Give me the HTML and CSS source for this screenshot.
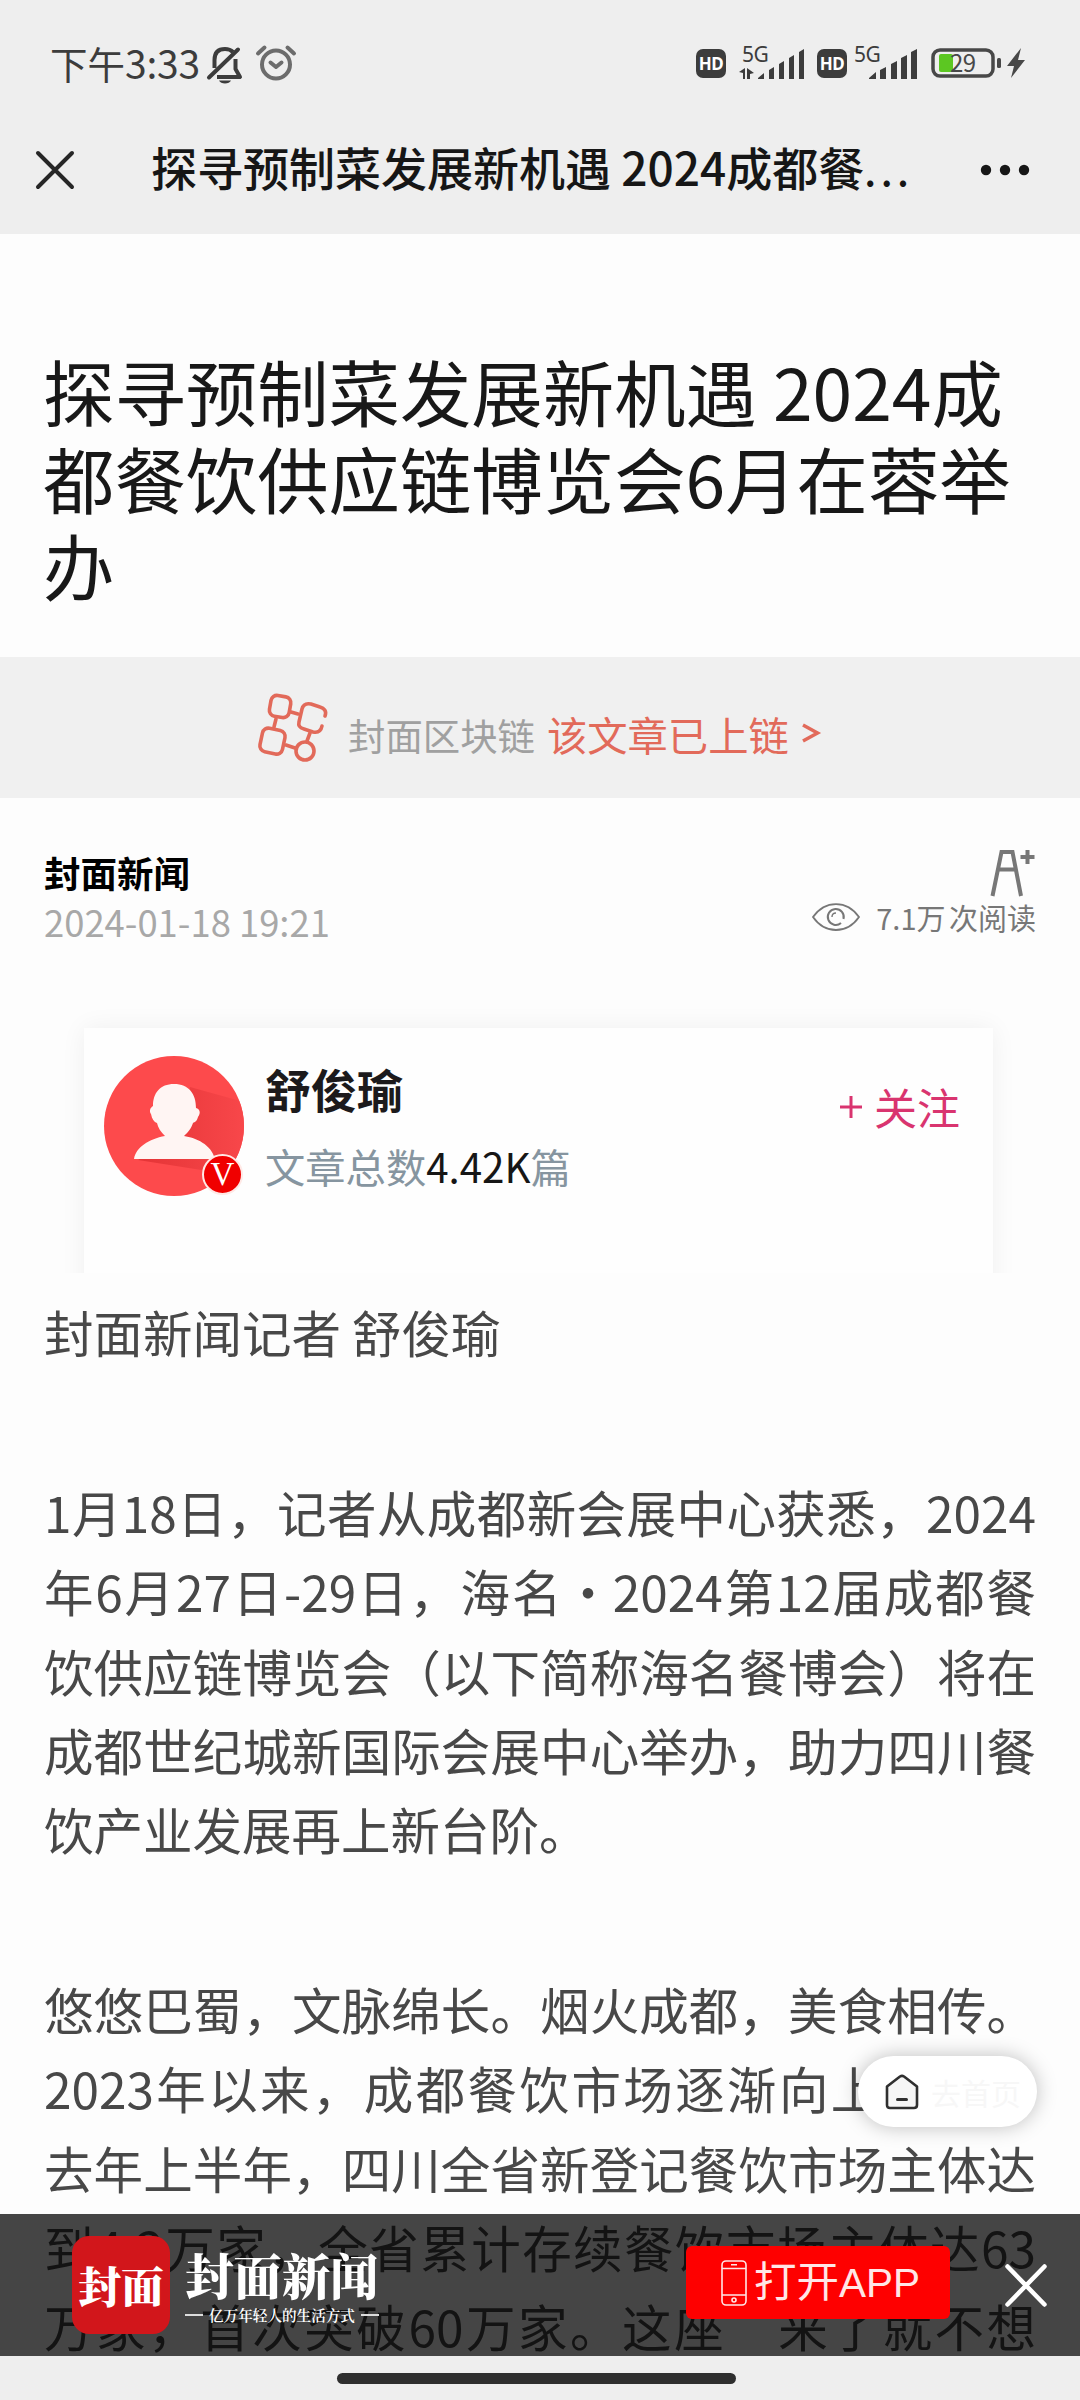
FILE: index.html
```html
<!DOCTYPE html>
<html lang="zh-CN">
<head>
<meta charset="utf-8">
<title>探寻预制菜发展新机遇</title>
<link rel="stylesheet" href="styles.css">
</head>
<body>
<div class="phone">
  <header class="top">
    <div class="status">
      <div class="clock">下午<span class="digits">3:33</span></div>
      <svg class="bell" viewBox="0 0 36 38" width="36" height="38" fill="none" stroke="#3c3c3c" stroke-width="4" stroke-linejoin="round">
        <path d="M7.5 22V14C7.5 6 12 3 18 3c3.500 0 6 1 8 3"/><path d="M28.500 13v10l4.500 8H10"/>
        <path d="M2 31.500 31 3.500" stroke-linecap="round"/><path d="M12 34.500h12c-1.500 4-10.500 4-12 0z" fill="#3c3c3c" stroke="none"/>
      </svg>
      <svg class="alarm" viewBox="0 0 40 36" width="40" height="36" fill="none" stroke="#6c6c6c" stroke-width="4" stroke-linecap="round" stroke-linejoin="round">
        <circle cx="20" cy="19.500" r="14"/><path d="M14.500 17.500 20 22l5.500-4.500M2 8.500 8.500 2.500M38 8.500 31.500 2.500"/>
      </svg>
      <div class="signals">
        <span class="hd">HD</span>
        <svg class="cell1" viewBox="0 0 66 36" width="66" height="36" fill="#3c3c3c">
          <text class="net" x="3" y="17">5G</text>
          <path d="M0 27 6 23v11H4v-6zM8 23l7 5-4 1v5H8zM19 33l6-5v6h-6zM30 25l5-3v12h-5zM40 19l5-3v18h-5zM50 13l5-3v24h-5zM60 7l5-3v30h-5z"/>
        </svg>
        <span class="hd">HD</span>
        <svg class="cell2" viewBox="0 0 64 36" width="64" height="36" fill="#3c3c3c">
          <text class="net" x="0" y="17">5G</text>
          <path d="M15 33l7-6v7h-7zM26 25l6-3v12h-6zM37 19l6-3v18h-6zM47 13l6-3v24h-6zM57 7l6-3v30h-6z"/>
        </svg>
        <svg class="battery" viewBox="0 0 96 32" width="96" height="32">
          <rect x="2" y="3" width="60" height="26" rx="7" fill="none" stroke="#484848" stroke-width="3.500"/>
          <rect x="8" y="7" width="14" height="18" rx="2" fill="#5cc722"/>
          <rect x="66" y="11" width="4" height="10" rx="1.500" fill="#484848"/>
          <text class="level" x="19" y="25">29</text>
          <path d="M90 1 76 19h7l-3 12 14-18h-7z" fill="#484848"/>
        </svg>
      </div>
    </div>
    <div class="navbar">
      <svg class="nav-close" viewBox="0 0 38 38" width="38" height="38" stroke="#262626" stroke-width="4" stroke-linecap="round"><path d="M2 2 36 36M36 2 2 36"/></svg>
      <div class="nav-title">探寻预制菜发展新机遇 2024成都餐<span class="dots">...</span></div>
      <svg class="nav-more" viewBox="0 0 50 12" width="50" height="12" fill="#161616"><circle cx="6" cy="6" r="5.200"/><circle cx="25" cy="6" r="5.200"/><circle cx="44" cy="6" r="5.200"/></svg>
    </div>
  </header>

  <main class="article">
    <h1 class="headline">探寻预制菜发展新机遇 2024成<br>都餐饮供应链博览会6月在蓉举<br>办</h1>

    <div class="chain">
      <svg class="chain-icon" viewBox="0 0 70 68" width="70" height="68" fill="none" stroke="#e26a5a" stroke-width="3.600" stroke-linecap="round">
        <rect x="12" y="2" width="20" height="21" rx="6" transform="rotate(10 22 13)"/>
        <path d="M67 22c2-5-1-8-5-9l-9-3c-5-1-8 1-9 5l-3 13c-1 4 1 6 5 7l9 3c5 1 8-1 9-6"/>
        <rect x="3" y="35" width="23" height="24" rx="6" transform="rotate(12 14 47)"/>
        <circle cx="47" cy="57" r="9"/>
        <path d="M33 18l7 2M18 25l-2 8M52 39l-3 8M28 51l9 3"/>
      </svg>
      <span class="chain-name">封面区块链</span>
      <span class="chain-state">该文章已上链</span>
      <svg class="chain-arrow" viewBox="0 0 18 20" width="18" height="20" fill="none" stroke="#e26a5a" stroke-width="3.500"><path d="M1 2 15.500 10 1 18"/></svg>
    </div>

    <section class="meta">
      <div class="source">
        <div class="source-name">封面新闻</div>
        <time class="source-date">2024-01-18 19:21</time>
      </div>
      <div class="stats">
        <svg class="font-size" viewBox="0 0 46 48" width="46" height="48" fill="none" stroke="#777" stroke-width="4"><path d="M2.500 47 11.500 3h11L31 47M9 20.500h17M37.500 1v14M30.500 8h14"/></svg>
        <div class="reads">
          <svg class="eye" viewBox="0 0 48 28" width="48" height="28" fill="none" stroke="#777" stroke-width="1.800"><path d="M1 14C13-3.300 35-3.300 47 14 35 31.300 13 31.300 1 14z"/><path d="M29 20a8 8 0 1 1 2.500-4" stroke-width="2"/><path d="M20 14c0-3 2-4 4-4" stroke-width="1.400"/></svg>
          <span>7.1万 次阅读</span>
        </div>
      </div>
    </section>

    <div class="card-clip">
      <section class="author">
        <div class="avatar">
          <svg viewBox="0 0 140 140" width="140" height="140">
            <defs><clipPath id="disc"><circle cx="70" cy="70" r="70"/></clipPath>
            <linearGradient id="shade" x1="0" y1="0" x2="1" y2="0"><stop offset="0" stop-color="#e43436"/><stop offset="1" stop-color="#f8474a"/></linearGradient></defs>
            <g clip-path="url(#disc)">
              <rect width="140" height="140" fill="#fd4a4c"/>
              <path d="M86 31 140 46V128L110 116 34 104 80 80z" fill="url(#shade)"/>
            </g>
            <path d="M70 28c15 0 22 10 22 24 4 1 5 5 2 9-1 4-3 5-5 6-2 6-5 9-9 13 12 2 27 8 31 23H30c2-12 15-20 31-23-4-4-7-8-8-13-3-1-5-4-6-9-2-3-1-6 2-8 0-13 7-22 21-22z" fill="#fff5f3"/>
          </svg>
          <span class="badge">V</span>
        </div>
        <div class="author-text">
          <div class="author-name">舒俊瑜</div>
          <div class="author-count">文章总数<b>4.42K</b>篇</div>
        </div>
        <div class="follow"><svg viewBox="0 0 22 22" width="22" height="22" stroke="#d9346f" stroke-width="3"><path d="M11 0v22M0 11h22"/></svg>关注</div>
      </section>
    </div>

    <div class="body">
      <p><span>封面新闻记者 舒俊瑜</span></p>
      <p>
        <span class="full">1月18日，记者从成都新会展中心获悉，2024</span>
        <span class="full">年6月27日-29日，海名•2024第12届成都餐</span>
        <span class="full">饮供应链博览会（以下简称海名餐博会）将在</span>
        <span class="full">成都世纪城新国际会展中心举办，助力四川餐</span>
        <span>饮产业发展再上新台阶。</span>
      </p>
      <p>
        <span class="full">悠悠巴蜀，文脉绵长。烟火成都，美食相传。</span>
        <span class="full">2023年以来，成都餐饮市场逐渐向上向好，</span>
        <span class="full">去年上半年，四川全省新登记餐饮市场主体达</span>
        <span class="full">到4.2万家，全省累计存续餐饮市场主体达63</span>
        <span class="full">万家，首次突破60万家。这座“来了就不想</span>
      </p>
    </div>

    <div class="home-pill">
      <svg viewBox="0 0 34 36" width="34" height="36" fill="#f6f6f6" stroke="#303030" stroke-width="2.600" stroke-linejoin="round" stroke-linecap="round"><path d="M2 12.500 15 2.500q2-1.300 4 0L32 12.500V31q0 3-3 3H5q-3 0-3-3z"/><path d="M12.500 25.500h9" stroke-width="3"/></svg>
      <span>去首页</span>
    </div>

    <aside class="banner">
      <div class="logo">封面</div>
      <div class="brand">
        <div class="brand-name">封面新闻</div>
        <div class="brand-line">亿万年轻人的生活方式</div>
      </div>
      <div class="open">
        <svg viewBox="0 0 26 46" width="26" height="46" fill="none" stroke="#ffe6e6" stroke-width="1.600"><rect x="1" y="1" width="24" height="44" rx="4"/><path d="M1 8.500h24M1 35h24M10 4.700h6"/><circle cx="13" cy="40" r="2"/></svg>
        <span>打开<i>APP</i></span>
      </div>
      <svg class="banner-close" viewBox="0 0 42 43" width="42" height="43" stroke="#fff" stroke-width="4.500" stroke-linecap="round"><path d="M2.500 2.500 39.500 40.500M39.500 2.500 2.500 40.500"/></svg>
    </aside>
  </main>

  <footer class="gesture"><div class="gesture-bar"></div></footer>
</div>
</body>
</html>
```
FILE: styles.css
```css
* { box-sizing: border-box; }
body { margin: 0; font-family: "Noto Sans CJK SC", sans-serif; }
svg { display: block; flex: none; overflow: visible; }

.phone { width: 1080px; height: 2400px; display: flex; flex-direction: column; overflow: hidden; background: #fdfdfd; white-space: nowrap; }

.top { height: 234px; flex: none; background: #eee; }
.status { height: 106px; padding: 20px 53px 0 50px; display: flex; align-items: center; }
.clock { width: 157px; margin-top: -2px; font-size: 37.500px; line-height: 50px; color: #3c3c3c; display: flex; align-items: baseline; }
.digits { font-size: 39px; letter-spacing: -.2px; }
.bell { margin-top: 3px; }
.alarm { margin-left: 13px; }
.signals { margin-left: auto; display: flex; align-items: center; }
.hd { width: 30px; height: 29px; border-radius: 7px; background: #3c3c3c; color: #fff; font: 700 17px/29px "Noto Sans", sans-serif; text-align: center; letter-spacing: -.5px; }
.net { font-family: "Noto Sans", sans-serif; font-size: 21px; letter-spacing: -.5px; }
.level { font-family: "Noto Sans CJK SC", sans-serif; font-size: 24px; fill: #484848; letter-spacing: -.5px; }
.cell1 { margin: 0 12px 0 13px; }
.cell2 { margin: 0 13px 0 7px; }

.navbar { height: 128px; padding: 0 50px 0 36px; display: flex; align-items: center; }
.nav-close { margin: 0 77px 0 0; }
.nav-title { margin-top: -6px; font-size: 46px; line-height: 60px; font-weight: 500; color: #161616; }
.dots { font-size: 40px; letter-spacing: 4.500px; }
.nav-more { margin-left: auto; }

.article { position: relative; height: 2122px; flex: none; overflow: hidden; }
.headline { margin: 0; height: 423px; padding: 113px 0 0 43px; font-size: 71.400px; line-height: 87px; font-weight: 400; color: #181818; }

.chain { height: 141px; background: #f0f0f0; display: flex; align-items: center; padding-left: 258px; }
.chain-name { margin-left: 20px; font-size: 37.400px; color: #a0a0a0; padding-top: 14px; }
.chain-state { margin-left: 12px; font-size: 40.300px; color: #e26a5a; padding-top: 12px; }
.chain-arrow { margin: 10px 0 0 13px; }

.meta { height: 204px; padding: 49px 44px 0; display: flex; justify-content: space-between; }
.source-name { font-size: 36.500px; line-height: 52px; font-weight: 700; color: #000; }
.source-date { display: block; font-size: 36.400px; line-height: 44px; color: #a8a8a8; }
.stats { display: flex; flex-direction: column; align-items: flex-end; padding-top: 2px; }
.reads { display: flex; align-items: center; gap: 16px; font-size: 29px; line-height: 40px; word-spacing: -3px; color: #777; }

.card-clip { height: 271px; padding: 26px 87px 0 84px; overflow: hidden; }
.author { height: 320px; padding: 28px 33px 0 20px; display: flex; background: #fefefe; box-shadow: 0 0 24px rgba(0,0,0,.06); }
.avatar { position: relative; width: 140px; height: 140px; }
.badge { position: absolute; left: 98px; top: 98px; width: 41px; height: 41px; border: 2px solid #ffe9e6; border-radius: 50%; background: #f00000; color: #fff; font: 33px/37px "Liberation Serif", serif; text-align: center; }
.author-text { margin-left: 21px; }
.author-name { font-size: 46px; line-height: 64px; font-weight: 700; color: #1c1a1c; }
.author-count { margin-top: 18px; font-size: 40.300px; line-height: 56px; color: #8695a0; }
.author-count b { font-weight: 400; color: #161616; }
.follow { margin-left: auto; height: 100px; display: flex; align-items: center; gap: 12px; font-size: 43px; color: #d9346f; }
.follow svg { margin-top: 2px; }

.body { padding: 19px 44px 0; font-size: 49.500px; line-height: 79.200px; color: #484848; }
.body p { margin: 0 0 101px; }
.body span { display: block; }
.body .full { text-align: justify; text-align-last: justify; }

.home-pill { position: absolute; left: 858px; top: 1822px; width: 179px; height: 71px; padding-left: 27px; border-radius: 36px; background: #fff; box-shadow: 0 0 20px rgba(0,0,0,.25); display: flex; align-items: center; gap: 12px; }
.home-pill span { font-size: 30px; color: #f7f7f7; }

.banner { position: absolute; left: 0; right: 0; bottom: 0; height: 142px; padding: 0 33px 0 72px; background: rgba(0,0,0,.73); display: flex; align-items: center; color: #fff; }
.logo { width: 98px; height: 98px; border-radius: 17px; background: #d2161b; font: 900 43px/98px "Noto Serif CJK SC", "Noto Sans CJK SC", serif; text-align: center; }
.brand { margin-left: 15px; width: 194px; font-family: "Noto Serif CJK SC", "Noto Sans CJK SC", serif; }
.brand-name { font-size: 48.500px; line-height: 58px; font-weight: 900; }
.brand-line { margin-top: 2px; display: flex; align-items: center; justify-content: space-between; font-size: 14.600px; line-height: 20px; font-weight: 600; }
.brand-line::before, .brand-line::after { content: ""; width: 18px; height: 2px; background: #ddd; }
.open { margin: -5px 0 0 307px; width: 264px; height: 73px; border-radius: 6px; background: #fe0000; display: flex; align-items: center; padding-left: 35px; gap: 7px; color: #ffe6e6; font-size: 42.500px; line-height: 60px; }
.open span { margin-top: -4px; }
.open i { font-style: normal; font-size: 40.500px; font-family: "Liberation Sans", sans-serif; }
.banner-close { margin-left: auto; }

.gesture { flex: 1; background: #eee; padding-top: 17px; }
.gesture-bar { width: 399px; height: 11px; margin-left: 337px; border-radius: 6px; background: #2e2e2e; }
```
